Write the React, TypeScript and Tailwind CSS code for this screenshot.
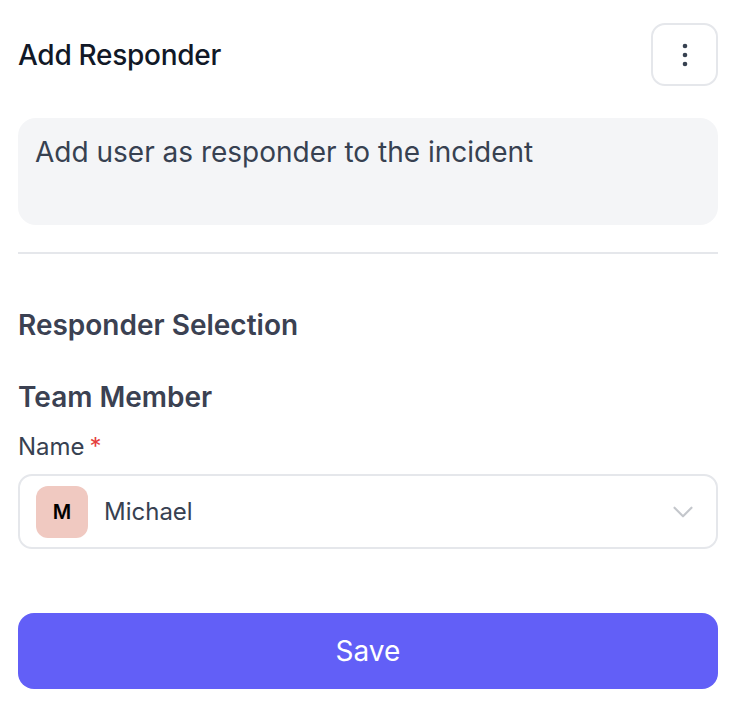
import { ChevronDown } from "lucide-react";

export default function App() {
  return (
    <div className="min-h-screen bg-white" style={{ fontFamily: "Inter, 'Noto Sans', sans-serif" }}>
      <div className="w-[700px] ml-[18px] pt-[23px]">
        {/* Header */}
        <header className="flex h-[63px] items-center justify-between">
          <h1 className="text-[28px] leading-[34px] font-medium text-[#111827] tracking-[-0.01em]">Add Responder</h1>
          <button className="flex h-[63px] w-[67px] items-center justify-center rounded-[14px] border-2 border-[#e5e7eb] bg-white">
            <svg width="6" height="24" viewBox="0 0 6 24" fill="#374151">
              <circle cx="3" cy="3" r="2.3" />
              <circle cx="3" cy="12" r="2.3" />
              <circle cx="3" cy="21" r="2.3" />
            </svg>
          </button>
        </header>

        {/* Description */}
        <div className="mt-[32px] h-[107px] rounded-[18px] bg-[#f4f5f7] px-[17px] pt-[17px]">
          <p className="text-[28px] leading-[34px] text-[#374151]">Add user as responder to the incident</p>
        </div>

        <div className="mt-[27px] h-[2px] bg-[#e5e7eb]" />

        {/* Responder selection */}
        <h2 className="mt-[54px] text-[28px] leading-[34px] font-semibold text-[#3b4152]">Responder Selection</h2>
        <h3 className="mt-[38px] text-[28px] leading-[34px] font-semibold text-[#3b4152]">Team Member</h3>

        <label className="mt-[18px] flex items-center text-[24px] leading-[30px] text-[#374151]">
          Name<span className="ml-[5px] text-[#e53e3e]">*</span>
        </label>

        <div className="mt-[12px] flex h-[75px] items-center rounded-[14px] border-2 border-[#e5e7eb] pl-[16px] pr-[16px]">
          <div className="flex h-[52px] w-[52px] items-center justify-center rounded-[12px] bg-[#f0c9c1] text-[20px] font-semibold text-black">
            M
          </div>
          <span className="ml-[16px] flex-1 text-[24px] text-[#374151]">Michael</span>
          <ChevronDown className="h-[34px] w-[34px] text-[#c4c7cc]" strokeWidth={1.5} />
        </div>

        <button className="mt-[64px] flex h-[76px] w-full items-center justify-center rounded-[16px] bg-[#625ff7] text-[28px] text-white">
          Save
        </button>
      </div>
    </div>
  );
}
